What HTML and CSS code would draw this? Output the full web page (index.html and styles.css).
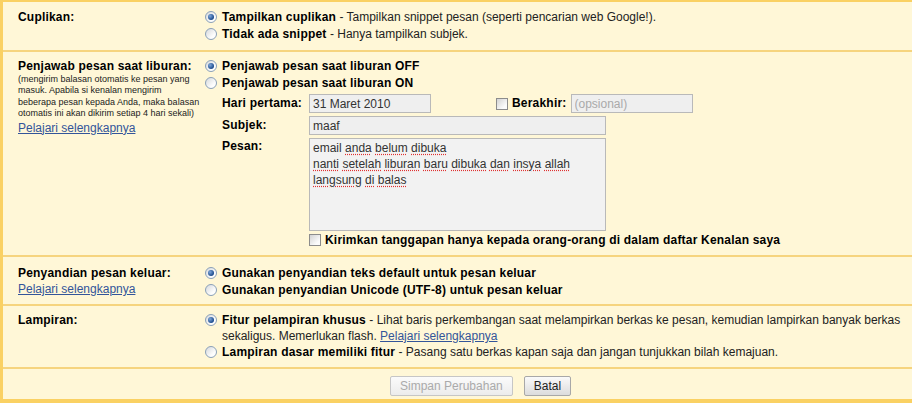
FILE: index.html
```html
<!DOCTYPE html>
<html lang="id">
<head>
    <meta charset="UTF-8">
    <title>Setelan Umum</title>
    <link rel="stylesheet" href="styles.css">
</head>
<body>
    <div class="settings">
        <div class="row snip">
            <div class="label"><b>Cuplikan:</b></div>
            <div class="opts">
                <label class="opt"><input type="radio" name="snip" checked><span><b>Tampilkan cuplikan</b> - Tampilkan snippet pesan (seperti pencarian web Google!).</span></label>
                <label class="opt"><input type="radio" name="snip"><span><b>Tidak ada snippet</b> - Hanya tampilkan subjek.</span></label>
            </div>
        </div>

        <div class="row vacation">
            <div class="label">
                <b>Penjawab pesan saat liburan:</b>
                <div class="note">(mengirim balasan otomatis ke pesan yang<br>masuk. Apabila si kenalan mengirim<br>beberapa pesan kepada Anda, maka balasan<br>otomatis ini akan dikirim setiap 4 hari sekali)</div>
                <a href="#">Pelajari selengkapnya</a>
            </div>
            <div class="opts">
                <label class="opt"><input type="radio" name="vac" checked><span><b>Penjawab pesan saat liburan OFF</b></span></label>
                <label class="opt"><input type="radio" name="vac"><span><b>Penjawab pesan saat liburan ON</b></span></label>
                <div class="vform">
                    <b class="flabel">Hari pertama:</b>
                    <div class="dates">
                        <input class="field date" type="text" value="31 Maret 2010">
                        <label class="end"><input type="checkbox"><b>Berakhir:</b></label>
                        <input class="field date" type="text" placeholder="(opsional)">
                    </div>
                    <b class="flabel">Subjek:</b>
                    <input class="field wide" type="text" value="maaf">
                    <b class="flabel top">Pesan:</b>
                    <div class="field wide textbox"><span class="sp">email</span> <span class="err">anda</span> <span class="err">belum</span> <span class="err">dibuka</span><br><span class="err">nanti</span> <span class="err">setelah</span> <span class="err">liburan</span> <span class="err">baru</span> <span class="err">dibuka</span> <span class="err">dan</span> <span class="err">insya</span> <span class="err">allah</span><br><span class="err">langsung</span> <span class="err">di</span> <span class="err">balas</span></div>
                    <span></span>
                    <label class="contacts"><input type="checkbox"><b>Kirimkan tanggapan hanya kepada orang-orang di dalam daftar Kenalan saya</b></label>
                </div>
            </div>
        </div>

        <div class="row encoding">
            <div class="label">
                <b>Penyandian pesan keluar:</b>
                <a href="#">Pelajari selengkapnya</a>
            </div>
            <div class="opts">
                <label class="opt"><input type="radio" name="enc" checked><span><b>Gunakan penyandian teks default untuk pesan keluar</b></span></label>
                <label class="opt"><input type="radio" name="enc"><span><b>Gunakan penyandian Unicode (UTF-8) untuk pesan keluar</b></span></label>
            </div>
        </div>

        <div class="row attach">
            <div class="label"><b>Lampiran:</b></div>
            <div class="opts">
                <label class="opt"><input type="radio" name="att" checked><span><b>Fitur pelampiran khusus</b> - Lihat baris perkembangan saat melampirkan berkas ke pesan, kemudian lampirkan banyak berkas sekaligus. Memerlukan flash. <a href="#">Pelajari selengkapnya</a></span></label>
                <label class="opt"><input type="radio" name="att"><span><b>Lampiran dasar memiliki fitur</b> - Pasang satu berkas kapan saja dan jangan tunjukkan bilah kemajuan.</span></label>
            </div>
        </div>

        <div class="actions">
            <button disabled>Simpan Perubahan</button>
            <button>Batal</button>
        </div>
    </div>
</body>
</html>
```

FILE: styles.css
```css
:root {
    --bg-color: #fff7d7;
    --border-color: #fad163;
    --line-color: #f6d47e;
    --text-color: #222;
    --link-color: #33559a;
}

body {
    margin: 0;
    font-family: 'Liberation Sans', Arial, sans-serif;
    font-size: 12px;
    color: var(--text-color);
    background-color: #fff;
}

b {
    color: #000;
    letter-spacing: 0.2px;
}

a {
    color: var(--link-color);
    text-decoration: underline;
}

.settings {
    background-color: var(--bg-color);
    border: solid var(--border-color);
    border-width: 2px 0 5px 3px;
}

.row {
    display: grid;
    grid-template-columns: 187px 1fr;
    padding: 7px 0 7px 15px;
    border-bottom: 2px solid var(--line-color);
    line-height: 17px;
}

.label {
    display: flex;
    flex-direction: column;
    align-items: flex-start;
}

.note {
    font-size: 9px;
    line-height: 11.4px;
    white-space: nowrap;
    color: #222;
    margin: -1px 0 1px;
}

.vacation {
    padding: 6px 0 8px 15px;
}

.vacation .label a {
    line-height: 15px;
}

.opts {
    display: flex;
    flex-direction: column;
}

.opt {
    display: flex;
    align-items: flex-start;
    padding-right: 4px;
}

.opt > span {
    flex: 1;
}

input[type="radio"] {
    appearance: none;
    flex: none;
    width: 12px;
    height: 12px;
    margin: 2px 5px 0 0;
    border: 1px solid #8aa0b8;
    border-radius: 50%;
    background: linear-gradient(135deg, #d6d9dc, #fdfdfd 70%);
    position: relative;
}

input[type="radio"]:checked::after {
    content: '';
    position: absolute;
    left: 2px;
    top: 2px;
    width: 6px;
    height: 6px;
    border-radius: 50%;
    background: radial-gradient(circle at 35% 35%, #7ea6da, #1c4b8c 70%);
}

input[type="checkbox"] {
    appearance: none;
    flex: none;
    width: 12px;
    height: 12px;
    margin: 0 4px 0 0;
    border: 1px solid #8c8c8c;
    background: linear-gradient(135deg, #d3d3d3, #fbfbfb 75%);
}

.vform {
    display: grid;
    grid-template-columns: 87px auto;
    justify-content: start;
    row-gap: 3px;
    margin: 2px 0 0 17px;
    align-items: center;
}

.flabel.top {
    align-self: start;
    line-height: 16px;
}

.field {
    box-sizing: border-box;
    font-family: inherit;
    font-size: 12px;
    color: #333;
    background-color: #efefef;
    border: 1px solid #b9b9b9;
    margin: 0;
    padding: 1px 3px;
}

.field::placeholder {
    color: #aaa;
}

.date {
    width: 122px;
    height: 19px;
}

.dates {
    display: flex;
    align-items: center;
}

.end {
    display: flex;
    align-items: center;
    margin: 0 4px 0 65px;
}

.wide {
    width: 297px;
    height: 19px;
}

.textbox {
    height: 93px;
    background-color: #f2f2f2;
    line-height: 16px;
    padding: 1px 3px;
}

.err {
    text-decoration: underline dotted #e03030;
    text-underline-offset: 2px;
}

.contacts {
    display: flex;
    align-items: center;
    line-height: 14px;
    margin-top: -1px;
}

.encoding {
    padding: 8px 0 5px 15px;
}

.encoding .label {
    line-height: 16px;
}

.attach {
    padding: 6px 0 7px 15px;
    line-height: 16px;
}

.actions {
    display: flex;
    gap: 11px;
    padding: 7px 0 3px 387px;
}

button {
    font-family: inherit;
    font-size: 12px;
    height: 20px;
    padding: 0 9px;
    color: #222;
    border: 1px solid #a8a8a8;
    border-radius: 2px;
    background: linear-gradient(#fafafa, #dcdcdc);
}

button:disabled {
    color: #aaa;
    border-color: #c6c6c6;
    background: linear-gradient(#fbfbfb, #ececec);
}
```
